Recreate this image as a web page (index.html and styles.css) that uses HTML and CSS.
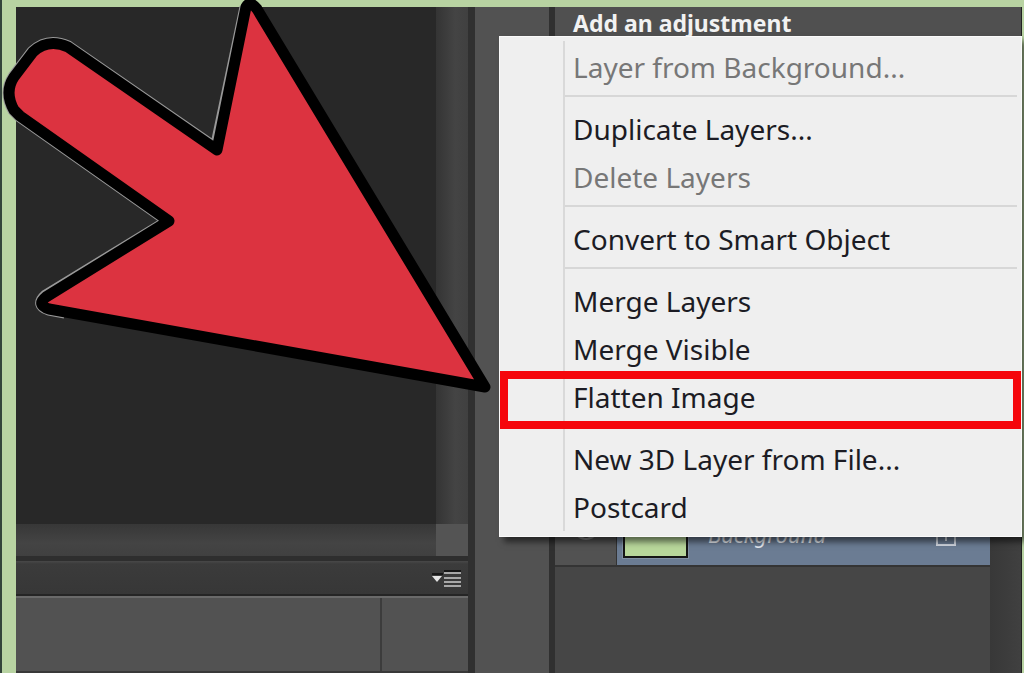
FILE: index.html
```html
<!DOCTYPE html>
<html lang="en">
<head>
<meta charset="utf-8">
<title>Flatten Image</title>
<link rel="stylesheet" href="styles.css">
</head>
<body>
<main class="frame">
  <section class="document">
    <div class="canvas-row">
      <div class="canvas"></div>
      <div class="scroll-v"></div>
    </div>
    <div class="scroll-h"><div class="corner"></div></div>
    <div class="tab-bar">
      <button class="panel-menu" aria-label="Panel menu">
        <svg width="30" height="18" viewBox="0 0 30 18" aria-hidden="true">
          <path d="M0 4h11M12 1h17" stroke="#171717" stroke-width="2"/>
          <path d="M0 6h10L5 12z" fill="#e4e4e4"/>
          <path d="M12 3h17M12 8h17M12 12h17M12 16h17" stroke="#a8a8a8" stroke-width="2"/>
        </svg>
      </button>
    </div>
    <div class="timeline"><div class="timeline-names"></div><div class="timeline-track"></div></div>
  </section>
  <div class="dock"></div>
  <section class="panels">
    <h1 class="panel-title">Add an adjustment</h1>
    <div class="layers">
      <div class="layer-row">
        <div class="eye-cell">
          <svg width="22" height="14" viewBox="0 0 22 14" aria-hidden="true"><ellipse cx="11" cy="7" rx="9" ry="5" fill="#858585"/><circle cx="11" cy="6" r="4" fill="#444"/></svg>
        </div>
        <div class="layer-main">
          <div class="thumb"></div>
          <span class="layer-name">Background</span>
          <svg class="lock" width="22" height="28" viewBox="0 0 22 28" aria-hidden="true"><path d="M6 12V7a5 5 0 0 1 10 0v5M2 12h18v14H2zM11 16v6" fill="none" stroke="#d3d9e2" stroke-width="2"/></svg>
        </div>
      </div>
    </div>
    <div class="panel-scroll"></div>
  </section>

  <menu class="context-menu">
    <li><button disabled>Layer from Background...</button></li>
    <li class="separator"></li>
    <li><button>Duplicate Layers...</button></li>
    <li><button disabled>Delete Layers</button></li>
    <li class="separator"></li>
    <li><button>Convert to Smart Object</button></li>
    <li class="separator"></li>
    <li><button>Merge Layers</button></li>
    <li><button>Merge Visible</button></li>
    <li class="highlight"><button>Flatten Image</button></li>
    <li class="separator blank"></li>
    <li><button>New 3D Layer from File...</button></li>
    <li><button>Postcard</button></li>
  </menu>

  <svg class="pointer" width="500" height="400" viewBox="0 0 500 400" aria-hidden="true">
    <path d="M246 7L216 149L68 47Q48 38 33 52L14 77Q4 92 14 110L20 116L169 221L46 296Q36 305 49 309L65 312" fill="none" stroke="#999" stroke-width="13" stroke-linejoin="round"/>
    <path d="M246 7L217 150L68 47Q48 38 33 52L14 77Q4 92 14 110L20 116L169 221L46 297Q36 305 49 309L485 387L257 9Q250 0 246 7Z" fill="#dc3340" stroke="#000" stroke-width="11" stroke-linejoin="round"/>
  </svg>
</main>
</body>
</html>
```
FILE: styles.css
```css
* { box-sizing: border-box; }

body {
  margin: 0;
  background: #b8d3a2;
  font-family: "Noto Sans", "Open Sans", sans-serif;
}

.frame {
  position: relative;
  display: flex;
  min-height: 100vh;
  padding: 7px 2px 0 14px;
  border-left: 2px solid #33443a;
  overflow: hidden;
}

.document {
  display: flex;
  flex: 1 1 452px;
  flex-direction: column;
}

.canvas-row { display: flex; flex: 1; }
.canvas { flex: 1; background: #282828; }
.scroll-v { width: 32px; background: linear-gradient(90deg, #343434, #444 60%, #404040); }
.scroll-h {
  display: flex;
  justify-content: flex-end;
  height: 32px;
  background: linear-gradient(#373737, #444 60%, #404040);
}
.corner { width: 32px; background: #545454; }

.tab-bar {
  display: flex;
  align-items: center;
  justify-content: flex-end;
  height: 40px;
  padding: 2px 6px 0 0;
  border-top: 5px solid #2e2e2e;
  border-bottom: 2px solid #252525;
  background: linear-gradient(#484848, #3b3b3b 3px, #373737);
}
.panel-menu { display: flex; padding: 0; border: 0; background: none; }

.timeline {
  display: flex;
  height: 77px;
  border-top: 2px solid #6a6a6a;
  border-bottom: 2px solid #393939;
  background: #525252;
}
.timeline-names { flex: 1; border-right: 2px solid #3c3c3c; }
.timeline-track { width: 86px; }

.dock {
  width: 87px;
  border-right: 6px solid #303030;
  border-left: 7px solid #303030;
  background: #525252;
}

.panels {
  display: grid;
  flex: 1 1 467px;
  grid-template-columns: 1fr 31px;
  grid-template-rows: auto 1fr;
  border-right: 1px solid #222;
  background: #464646;
}
.panel-title {
  grid-column: 1 / -1;
  height: 36px;
  margin: 0;
  padding-left: 18px;
  background: #505050;
  color: #f2f2f2;
  font-size: 23px;
  font-weight: 700;
  line-height: 32px;
}
.layers { padding-top: 460px; }
.panel-scroll { background: linear-gradient(90deg, #383838, #404040); }

.layer-row {
  display: flex;
  height: 64px;
  border-bottom: 2px solid #343434;
}
.eye-cell {
  display: flex;
  justify-content: center;
  width: 62px;
  padding-top: 25px;
  border-right: 1px solid #333;
  background: #525252;
}
.layer-main {
  display: flex;
  flex: 1;
  align-items: flex-start;
  padding: 6px 33px 0 6px;
  background: #6b7c93;
}
.thumb {
  width: 65px;
  height: 49px;
  border: 2px solid #151515;
  outline: 1px solid #8291a6;
  background: #b8d79b;
}
.layer-name {
  flex: 1;
  padding-left: 20px;
  color: #e4e8ee;
  font-size: 22px;
  font-style: italic;
  line-height: 50px;
}
.lock { margin-top: 10px; }

.context-menu {
  position: absolute;
  top: 36px;
  right: 2px;
  left: 497px;
  margin: 0;
  padding: 6px 0 5px;
  border: 1px solid #fafafa;
  background: linear-gradient(#d9d9d9, #d9d9d9) 63px 4px / 2px calc(100% - 9px) no-repeat #efefef;
  box-shadow: 5px 5px 6px #0008;
  list-style: none;
}
.context-menu button {
  display: block;
  width: 100%;
  height: 48px;
  padding: 0 0 0 73px;
  border: 0;
  background: none;
  color: #1c1c24;
  font: 28px/48px "Noto Sans", "Open Sans", sans-serif;
  text-align: left;
  white-space: nowrap;
}
.context-menu button:disabled { color: #777; }
.separator {
  height: 14px;
  margin: 0 4px 0 65px;
  background: linear-gradient(#d7d7d7, #d7d7d7) 0 4px / 100% 2px no-repeat;
}
.blank { background: none; }
.highlight { position: relative; }
.highlight::after {
  position: absolute;
  inset: -2px 0 -8px;
  border: 8px solid #f5060b;
  content: "";
  pointer-events: none;
}

.pointer { position: absolute; top: 0; left: -2px; pointer-events: none; }
```
